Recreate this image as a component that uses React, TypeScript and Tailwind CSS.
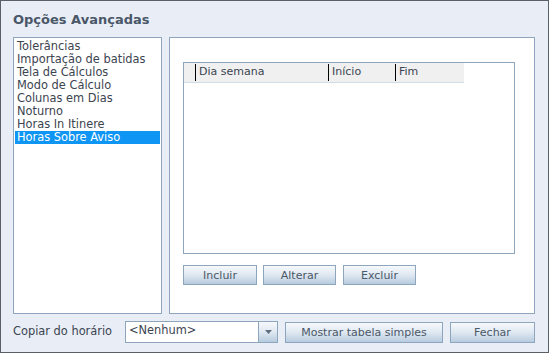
import React from "react";

const items = [
  "Tolerâncias",
  "Importação de batidas",
  "Tela de Cálculos",
  "Modo de Cálculo",
  "Colunas em Dias",
  "Noturno",
  "Horas In Itinere",
  "Horas Sobre Aviso",
];

const Btn: React.FC<{ className?: string; children: React.ReactNode }> = (props) => (
  <button
    className={
      "flex items-center justify-center border border-[#8ea6bd] bg-gradient-to-b from-[#f6f9fc] via-[#dfe8f1] to-[#b7cbdf] text-[11px] leading-none text-[#4b5868] " +
      (props.className ?? "")
    }
  >
    {props.children}
  </button>
);

export default function App() {
  return (
    <div
      className="flex h-[353px] w-[549px] flex-col border border-[#5b5f66] bg-[#e9eef6] text-[11.4px] text-[#3b4450]"
      style={{ fontFamily: '"DejaVu Sans", Verdana, sans-serif' }}
    >
      <div className="h-[36px] pl-[12px] pt-[11px] text-[13px] font-bold leading-[16px] text-[#4a5769]">
        Opções Avançadas
      </div>

      <div className="flex h-[277px] pl-[12px] gap-[7px]">
        <div className="w-[149px] border border-[#8ea6bd] bg-white px-[1px] pt-[2px]">
          {items.map((it, i) => (
            <div
              key={it}
              className={
                "h-[13px] pl-[2px] leading-[13px] whitespace-nowrap " +
                (i === items.length - 1 ? "bg-[#0f95f3] text-white" : "text-[#3b4450]")
              }
            >
              {it}
            </div>
          ))}
        </div>

        <div className="flex w-[366px] flex-col border border-[#8ea6bd] bg-white pl-[13px] pt-[24px]">
          <div className="h-[192px] w-[332px] border border-[#8ea6bd] bg-white">
            <div className="flex h-[20px] w-[280px] border-b border-[#d3dde6] bg-[#f0f0f0] text-[11px] text-[#3b4450]">
              <div className="my-[1px] w-[12px] border-r border-black" />
              <div className="my-[1px] flex w-[133px] items-center border-r border-black pl-[3px]">Dia semana</div>
              <div className="my-[1px] flex w-[67px] items-center border-r border-black pl-[3px]">Início</div>
              <div className="flex items-center pl-[3px]">Fim</div>
            </div>
          </div>
          <div className="mt-[11px] flex">
            <Btn className="h-[20px] w-[74px]">Incluir</Btn>
            <Btn className="ml-[6px] h-[20px] w-[73px]">Alterar</Btn>
            <Btn className="ml-[7px] h-[20px] w-[73px]">Excluir</Btn>
          </div>
        </div>
      </div>

      <div className="flex items-center pl-[12px] pt-[7px]">
        <div className="w-[112px] text-[#3b4450]">Copiar do horário</div>
        <div className="flex h-[22px] w-[153px] border border-[#8ea6bd] bg-white">
          <div className="flex-1 pl-[3px] leading-[16px]">&lt;Nenhum&gt;</div>
          <div className="flex w-[19px] items-center justify-center border-l border-[#8ea6bd] bg-gradient-to-b from-[#f6f9fc] via-[#dfe8f1] to-[#b7cbdf]">
            <svg width="7" height="4" viewBox="0 0 7 4">
              <path d="M0 0h7L3.5 4z" fill="#5f6f80" />
            </svg>
          </div>
        </div>
        <Btn className="ml-[7px] h-[21px] w-[158px]">Mostrar tabela simples</Btn>
        <Btn className="ml-[7px] h-[21px] w-[85px]">Fechar</Btn>
      </div>
    </div>
  );
}
